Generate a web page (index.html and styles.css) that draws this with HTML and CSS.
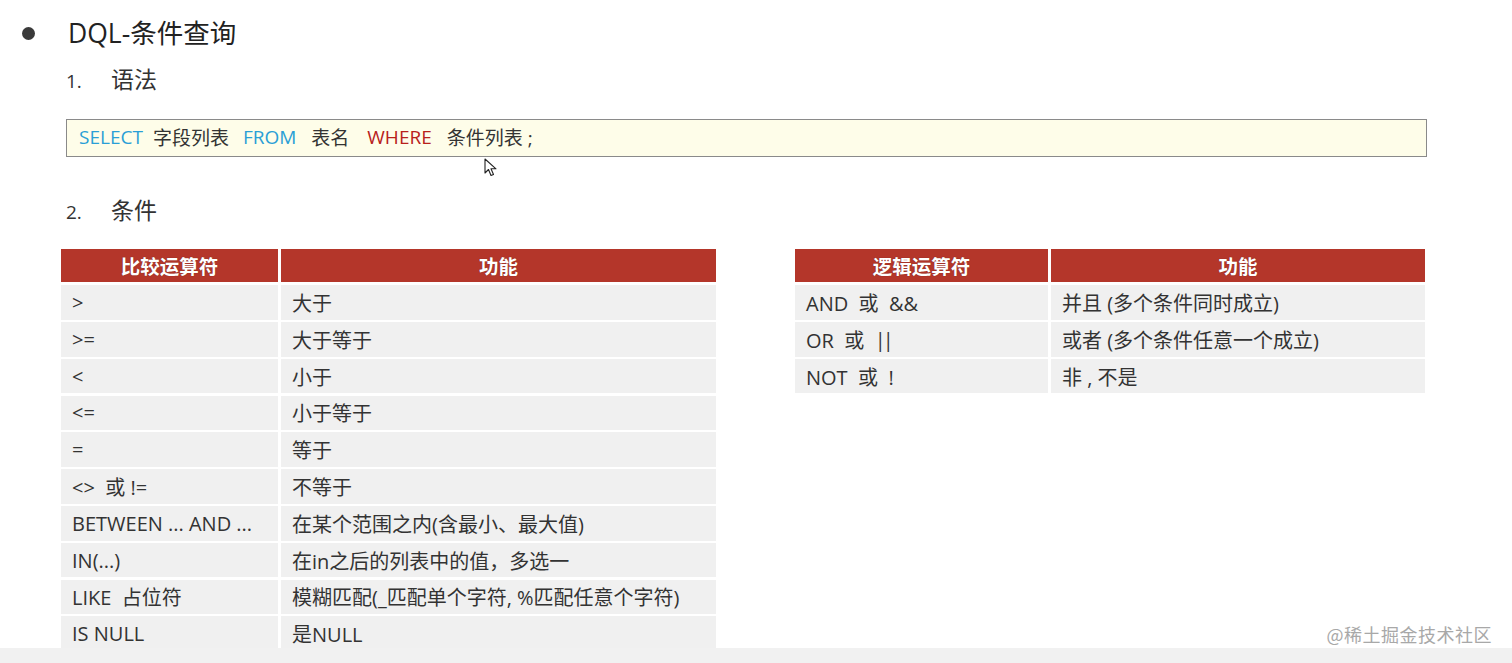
FILE: index.html
```html
<!DOCTYPE html>
<html lang="zh">
<head>
<meta charset="utf-8">
<link rel="stylesheet" href="styles.css">
</head>
<body>
<div class="page">
  <div class="title-row">
    <span class="bullet"></span>
    <h1 class="title">DQL-条件查询</h1>
  </div>
  <div class="item"><span class="num">1.</span><span class="label">语法</span></div>
  <div class="code-box"><span class="kw-blue">SELECT</span><span class="sp1"></span><span>字段列表</span><span class="sp3"></span><span class="kw-blue">FROM</span><span class="sp2"></span><span>表名</span><span class="sp4"></span><span class="kw-red">WHERE</span><span class="sp2"></span><span>条件列表 ;</span></div>
  <div class="item item2"><span class="num">2.</span><span class="label">条件</span></div>
  <div class="tables">
    <div class="tbl tbl-left">
      <div class="th">比较运算符</div><div class="th">功能</div>
      <div class="td">&gt;</div><div class="td">大于</div>
      <div class="td">&gt;=</div><div class="td">大于等于</div>
      <div class="td">&lt;</div><div class="td">小于</div>
      <div class="td">&lt;=</div><div class="td">小于等于</div>
      <div class="td">=</div><div class="td">等于</div>
      <div class="td">&lt;&gt;&nbsp; 或 !=</div><div class="td">不等于</div>
      <div class="td">BETWEEN ... AND ...</div><div class="td">在某个范围之内(含最小、最大值)</div>
      <div class="td">IN(...)</div><div class="td">在in之后的列表中的值，多选一</div>
      <div class="td">LIKE&nbsp; 占位符</div><div class="td">模糊匹配(_匹配单个字符, %匹配任意个字符)</div>
      <div class="td">IS NULL</div><div class="td">是NULL</div>
    </div>
    <div class="tbl tbl-right">
      <div class="th">逻辑运算符</div><div class="th">功能</div>
      <div class="td">AND&nbsp; 或&nbsp; &amp;&amp;</div><div class="td">并且 (多个条件同时成立)</div>
      <div class="td">OR&nbsp; 或&nbsp; <span class="bars">||</span></div><div class="td">或者 (多个条件任意一个成立)</div>
      <div class="td">NOT&nbsp; 或&nbsp; !</div><div class="td">非 , 不是</div>
    </div>
  </div>
</div>
<svg class="cursor" width="14" height="20" viewBox="0 0 14 20"><path d="M1 1 L1 15 L4.5 11.5 L7 17.5 L9.5 16.5 L7 10.8 L12 10.8 Z" fill="#fff" stroke="#222" stroke-width="1.1" stroke-linejoin="round"/></svg>
<div class="watermark">@稀土掘金技术社区</div>
<div class="bottom-strip"></div>
</body>
</html>
```
FILE: styles.css
```css
html, body {
  margin: 0;
  padding: 0;
  background: #ffffff;
  width: 1512px;
  height: 663px;
  overflow: hidden;
  position: relative;
  font-family: "Open Sans", "Noto Sans CJK SC", sans-serif;
  color: #333;
}
.page {
  padding: 14px 0 0 0;
}
.title-row {
  display: flex;
  align-items: center;
  height: 38px;
}
.bullet {
  width: 13px;
  height: 13px;
  border-radius: 50%;
  background: #3a3a3a;
  margin-left: 22px;
  margin-right: 33px;
}
.title {
  margin: 0;
  font-weight: 400;
  font-size: 26.5px;
  color: #222;
  line-height: 38px;
}
.item {
  display: flex;
  align-items: baseline;
  height: 30px;
  line-height: 30px;
  margin-top: 12px;
  padding-left: 66px;
  font-size: 23px;
  color: #333;
}
.item .num {
  font-size: 19px;
  width: 45px;
}
.code-box {
  margin: 25px 0 0 66px;
  width: 1361px;
  height: 38px;
  border: 1px solid #8a8a8a;
  background: #fefde9;
  box-sizing: border-box;
  display: flex;
  align-items: center;
  padding: 0 0 3px 12px;
  font-size: 19px;
  color: #333;
  white-space: nowrap;
}
.kw-blue { color: #2a9fd6; }
.kw-red { color: #b8211b; }
.sp1 { display: inline-block; width: 10px; }
.sp2 { display: inline-block; width: 15px; }
.sp3 { display: inline-block; width: 14px; }
.sp4 { display: inline-block; width: 18px; }
.item2 {
  margin-top: 38px;
}
.tables {
  display: flex;
  align-items: flex-start;
  margin-top: 24px;
  padding-left: 61px;
  gap: 79px;
}
.tbl {
  display: grid;
  column-gap: 3px;
  row-gap: 2.3px;
}
.tbl-left {
  width: 655px;
  grid-template-columns: 217px 1fr;
}
.tbl-right {
  width: 630px;
  grid-template-columns: 253px 1fr;
}
.th {
  height: 33px;
  background: #b4362a;
  color: #fff;
  font-weight: 700;
  font-size: 19.5px;
  display: flex;
  align-items: center;
  justify-content: center;
  text-shadow: 0 0 1px rgba(0,0,0,0.4);
  margin-bottom: 1px;
}
.td {
  height: 34.5px;
  background: #f0f0f0;
  display: flex;
  align-items: center;
  padding-left: 11px;
  font-size: 20px;
  color: #333;
  white-space: pre;
}
.bars {
  letter-spacing: -3px;
}
.cursor {
  position: absolute;
  left: 484px;
  top: 158px;
}
.watermark {
  position: absolute;
  right: 20px;
  top: 621px;
  font-size: 18px;
  color: #a8a8a8;
  font-family: "Noto Sans CJK SC", sans-serif;
  letter-spacing: 0.5px;
}
.bottom-strip {
  position: absolute;
  left: 0;
  right: 0;
  top: 648px;
  height: 15px;
  background: #f1f1f1;
}
```
